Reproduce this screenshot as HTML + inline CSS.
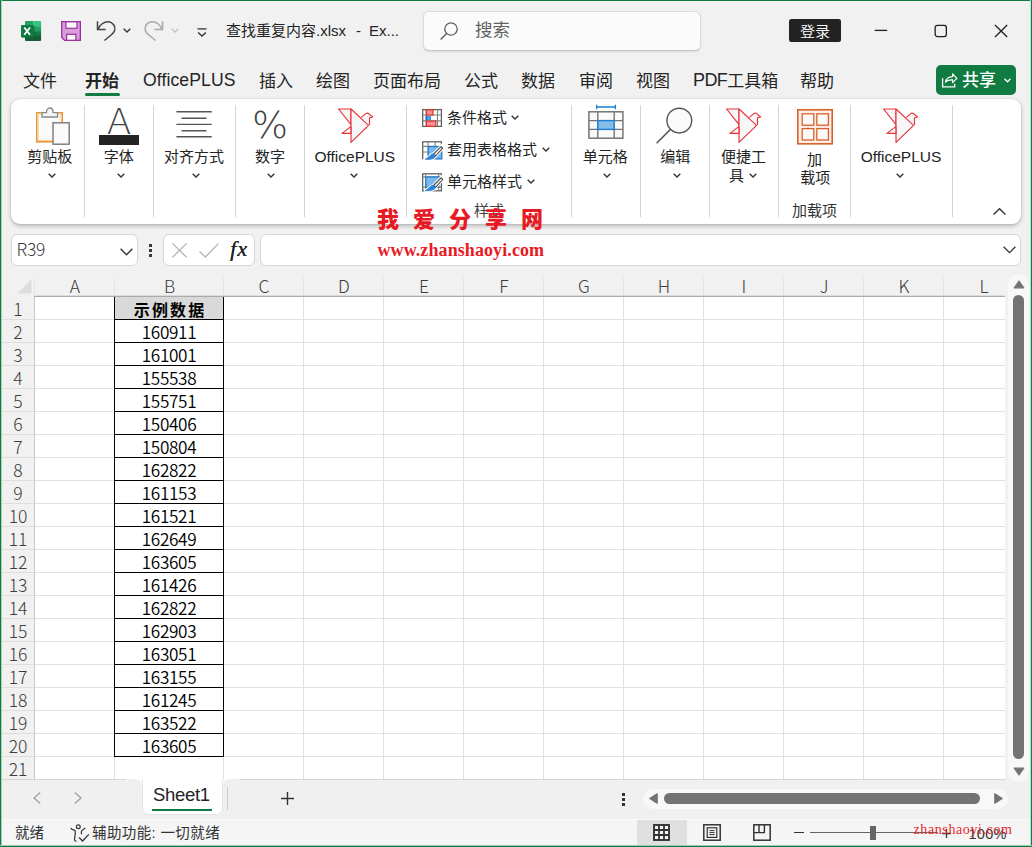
<!DOCTYPE html>
<html lang="zh-CN">
<head>
<meta charset="utf-8">
<title>查找重复内容.xlsx - Excel</title>
<style>
*{box-sizing:border-box;margin:0;padding:0}
html,body{width:1032px;height:847px;overflow:hidden;background:#f1f1f1}
body{font-family:"Liberation Sans","Noto Sans CJK SC",sans-serif;color:#242424;position:relative}
.a{position:absolute}
.t{position:absolute;white-space:nowrap;line-height:1}
svg{position:absolute;overflow:visible}
.tab{position:absolute;top:72px;font-size:17px;white-space:nowrap;line-height:20px;color:#242424}
.sep{position:absolute;top:105px;width:1px;height:112px;background:#d4d4d4}
.gl{position:absolute;font-size:15px;text-align:center;line-height:20px;white-space:nowrap;color:#242424;transform:translateX(-50%)}
.ch{position:absolute;width:8px;height:5px}
.colh{position:absolute;top:275px;height:20px;width:80px;font-size:17.5px;line-height:21px;text-align:center;color:#3c3c3c;font-family:"Noto Sans CJK SC","Liberation Sans",sans-serif;font-weight:300}
.rowh{position:absolute;left:2px;width:32px;height:23px;font-size:17.5px;line-height:26px;color:#3c3c3c;text-align:center;font-family:"Noto Sans CJK SC","Liberation Sans",sans-serif;font-weight:300}
.cell{position:absolute;left:114px;width:110px;height:24px;border:1px solid #000;text-align:center;font-size:17.2px;line-height:23px;letter-spacing:-0.35px;font-weight:350;color:#000;font-family:"Noto Sans CJK SC","Liberation Sans",sans-serif;background:#fff}
.vl{position:absolute;top:297px;width:1px;height:482px;background:#e1e1e1}
.hl{position:absolute;left:34px;height:1px;width:971px;background:#e1e1e1}
.box{position:absolute;background:#fff;border:1px solid #d6d6d6;border-radius:6px}
</style>
</head>
<body>

<div class="a" style="left:0;top:0;width:1032px;height:1px;background:#107c41"></div>
<div class="a" style="left:0;top:0;width:1px;height:847px;background:#107c41"></div>
<div class="a" style="left:1px;top:0;width:1px;height:847px;background:#a8cfb8"></div>
<div class="a" style="left:1031px;top:0;width:1px;height:847px;background:#107c41"></div>
<div class="a" style="left:1030px;top:0;width:1px;height:847px;background:#c3dccd"></div>
<div class="a" style="left:0;top:846px;width:1032px;height:1px;background:#107c41"></div>
<div class="a" style="left:0;top:845px;width:1032px;height:1px;background:#9cc9af"></div>
<!-- TITLE BAR -->
<svg style="left:20px;top:20px" width="22" height="22" viewBox="0 0 22 22">
<path d="M6 1 H13.1 V6.2 H5 V2 Q5 1 6 1 Z" fill="#21a366"/><path d="M13.1 1 H20.1 Q21.1 1 21.1 2 V6.2 H13.1 Z" fill="#33c481"/>
<rect x="5" y="6.2" width="8.1" height="4.9" fill="#107c41"/><rect x="13.1" y="6.2" width="8" height="4.9" fill="#21a366"/>
<rect x="5" y="11.1" width="8.1" height="5" fill="#185c37"/><rect x="13.1" y="11.1" width="8" height="5" fill="#107c41"/>
<path d="M5 16.1 H21.1 V19.9 Q21.1 20.9 20.1 20.9 H6 Q5 20.9 5 19.9 Z" fill="#185c37"/>
<rect x="1.6" y="5.3" width="13" height="12.5" rx="1.2" fill="#0b3d24" opacity="0.35"/>
<rect x="1" y="4.9" width="12.9" height="12.5" rx="1.2" fill="#107c41"/>
<path d="M4.3 7.5 L10 14.8 M10 7.5 L4.3 14.8" stroke="#fff" stroke-width="1.8" fill="none"/>
</svg>
<svg style="left:61px;top:21px" width="20" height="20" viewBox="0 0 20 20">
<path d="M0.75 0.7 H19.35 V19.35 H3.7 L0.75 16.5 Z" fill="#dc9cdc" stroke="#9a2e9e" stroke-width="1.3"/>
<rect x="4.9" y="0.8" width="11.1" height="6.5" fill="#f8f8f8" stroke="#9a2e9e" stroke-width="1.2"/>
<rect x="5.6" y="13.3" width="9.3" height="6" fill="#f8f8f8" stroke="#9a2e9e" stroke-width="1.2"/>
</svg>
<svg style="left:96px;top:20px" width="20" height="21" viewBox="0 0 20 21">
<path d="M1.5 1.3 V9.5 H9.7" fill="none" stroke="#444" stroke-width="1.5"/>
<path d="M2 9.2 C4 4.4 8.4 1.3 12.4 1.7 C17 2.2 19.7 6.4 18.7 10.2 C18.2 12 17 13.4 15.4 14.8 L8.4 20.5" fill="none" stroke="#444" stroke-width="1.5"/>
</svg>
<svg style="left:123.4px;top:27.9px" width="8" height="5" viewBox="0 0 8 5"><path d="M0.7 0.7 L4 4 L7.3 0.7" fill="none" stroke="#333" stroke-width="1.4"/></svg>
<svg style="left:143.9px;top:20px" width="20" height="21" viewBox="0 0 20 21">
<g transform="translate(20,0) scale(-1,1)">
<path d="M1.5 1.3 V9.5 H9.7" fill="none" stroke="#a8a8a8" stroke-width="1.5"/>
<path d="M2 9.2 C4 4.4 8.4 1.3 12.4 1.7 C17 2.2 19.7 6.4 18.7 10.2 C18.2 12 17 13.4 15.4 14.8 L8.4 20.5" fill="none" stroke="#a8a8a8" stroke-width="1.5"/>
</g></svg>
<svg style="left:171.4px;top:27.9px" width="8" height="5" viewBox="0 0 8 5"><path d="M0.7 0.7 L4 4 L7.3 0.7" fill="none" stroke="#c4c4c4" stroke-width="1.3"/></svg>
<svg style="left:196.5px;top:27.6px" width="10" height="9" viewBox="0 0 10 9"><path d="M0.5 0.9 H9.5" stroke="#333" stroke-width="1.3"/><path d="M1.2 4.5 L5 8 L8.8 4.5" fill="none" stroke="#333" stroke-width="1.4"/></svg>
<div class="t" style="left:226px;top:23px;font-size:15px;color:#242424">查找重复内容.xlsx</div>
<div class="t" style="left:356px;top:23px;font-size:15px;color:#242424">-</div>
<div class="t" style="left:369px;top:23px;font-size:15px;color:#242424">Ex...</div>
<div class="a" style="left:423px;top:11px;width:278px;height:40px;background:#fbfbfb;border:1px solid #dcdcdc;border-bottom-color:#c9c9c9;border-radius:6px;box-shadow:0 1px 2px rgba(0,0,0,.10)"></div>
<svg style="left:440px;top:22px" width="18" height="18" viewBox="0 0 18 18"><circle cx="11" cy="7" r="6.2" fill="none" stroke="#606060" stroke-width="1.3"/><path d="M6.6 11.4 L0.6 17.4" stroke="#606060" stroke-width="1.4"/></svg>
<div class="t" style="left:475px;top:22px;font-size:17.5px;color:#616161">搜索</div>
<div class="a" style="left:789px;top:19px;width:52px;height:23px;background:#222;border-radius:2.5px;color:#fff;font-size:15px;line-height:25px;text-align:center;font-weight:350">登录</div>
<svg style="left:874px;top:24px" width="14" height="14" viewBox="0 0 14 14"><path d="M0.7 6.4 H13.2" stroke="#1f1f1f" stroke-width="1.3"/></svg>
<svg style="left:934px;top:24px" width="14" height="14" viewBox="0 0 14 14"><rect x="1.15" y="1.35" width="11.2" height="11.2" rx="2.2" fill="none" stroke="#1f1f1f" stroke-width="1.3"/></svg>
<svg style="left:994px;top:24px" width="14" height="14" viewBox="0 0 14 14"><path d="M1 1 L13.2 13 M13.2 1 L1 13" stroke="#1f1f1f" stroke-width="1.3"/></svg>
<!-- TABS -->
<div class="tab" style="left:23px">文件</div>
<div class="tab" style="left:85px;font-weight:bold">开始</div>
<div class="tab" style="left:143px;font-size:17.6px;letter-spacing:0.1px;margin-top:-2px">OfficePLUS</div>
<div class="tab" style="left:259px">插入</div>
<div class="tab" style="left:316px">绘图</div>
<div class="tab" style="left:373px">页面布局</div>
<div class="tab" style="left:464px">公式</div>
<div class="tab" style="left:521px">数据</div>
<div class="tab" style="left:579px">审阅</div>
<div class="tab" style="left:636px">视图</div>
<div class="tab" style="left:693px;margin-top:-1px"><span style="font-size:18px;letter-spacing:-0.6px;position:relative;top:-1px">PDF</span>工具箱</div>
<div class="tab" style="left:800px">帮助</div>
<div class="a" style="left:85px;top:93px;width:35px;height:3px;background:#107c41;border-radius:1.5px"></div>
<div class="a" style="left:936px;top:65px;width:80px;height:30px;background:#107c41;border-radius:5px"></div>
<svg style="left:941.5px;top:72.5px" width="16" height="15" viewBox="0 0 16 15"><path d="M0.6 5.3 V13.9 H12.7 V10.7" fill="none" stroke="#fff" stroke-width="1.3"/><path d="M3.4 9 C4 5.6 6.8 3.9 10.6 3.7 V0.9 L14.9 5.3 L10.6 9.7 V6.8 C7.4 6.7 5 7.2 3.4 9 Z" fill="none" stroke="#fff" stroke-width="1.2" stroke-linejoin="round"/></svg>
<div class="t" style="left:962px;top:72px;font-size:17px;color:#fff;font-weight:500">共享</div>
<svg style="left:1004px;top:78px" width="7" height="5" viewBox="0 0 7 5"><path d="M0.5 0.7 L3.5 3.8 L6.5 0.7" fill="none" stroke="#fff" stroke-width="1.3"/></svg>
<!-- RIBBON -->
<div class="a" style="left:11px;top:99px;width:1010px;height:125px;background:#fff;border-radius:9px;box-shadow:0 2px 4px rgba(0,0,0,.24),0 0 2px rgba(0,0,0,.14)"></div>
<div class="sep" style="left:84px"></div>
<div class="sep" style="left:153px"></div>
<div class="sep" style="left:235px"></div>
<div class="sep" style="left:304px"></div>
<div class="sep" style="left:406px"></div>
<div class="sep" style="left:571px"></div>
<div class="sep" style="left:640px"></div>
<div class="sep" style="left:709px"></div>
<div class="sep" style="left:778px"></div>
<div class="sep" style="left:850px"></div>
<div class="sep" style="left:952px"></div>
<svg style="left:36px;top:107px" width="34" height="38" viewBox="0 0 34 38">
<rect x="0.8" y="5.8" width="25.4" height="29" fill="#fafafa" stroke="#e8902c" stroke-width="1.5"/>
<rect x="2.2" y="7.2" width="22.6" height="26.2" fill="none" stroke="#fbd7a3" stroke-width="1.2"/>
<path d="M6 10 V5.6 H10.5 C10.5 2.8 11.8 1 13.8 1 C15.8 1 17.1 2.8 17.1 5.6 H21.6 V10 Z" fill="#f6f6f6" stroke="#8a8a8a" stroke-width="1.3"/>
<rect x="17" y="15.8" width="16.2" height="21.4" fill="#fafafa" stroke="#787878" stroke-width="1.4"/>
</svg>
<div class="gl" style="left:49.7px;top:147px">剪贴板</div>
<svg style="left:47.5px;top:173.0px" width="8" height="5" viewBox="0 0 8 5"><path d="M0.7 0.7 L4 4 L7.3 0.7" fill="none" stroke="#333" stroke-width="1.4"/></svg>
<div class="t" style="left:98px;top:99.5px;width:42px;text-align:center;font-family:'DejaVu Sans Light','DejaVu Sans','Liberation Sans',sans-serif;font-weight:200;font-size:36px;line-height:44px;color:#444">A</div>
<div class="a" style="left:99px;top:135px;width:40px;height:9.5px;background:#242424"></div>
<div class="gl" style="left:118.8px;top:147px">字体</div>
<svg style="left:116.5px;top:173.0px" width="8" height="5" viewBox="0 0 8 5"><path d="M0.7 0.7 L4 4 L7.3 0.7" fill="none" stroke="#333" stroke-width="1.4"/></svg>
<svg style="left:176px;top:110px" width="36" height="28" viewBox="0 0 36 28"><path d="M0.4 1.8 H35.7 M5.5 8.2 H30.5 M0.4 14.4 H35.7 M5.5 20.7 H30.5 M0.4 26.8 H35.7" stroke="#555" stroke-width="1.4"/></svg>
<div class="gl" style="left:194.1px;top:147px">对齐方式</div>
<svg style="left:191.5px;top:173.0px" width="8" height="5" viewBox="0 0 8 5"><path d="M0.7 0.7 L4 4 L7.3 0.7" fill="none" stroke="#333" stroke-width="1.4"/></svg>
<div class="t" style="left:249px;top:101px;width:42px;text-align:center;font-family:'DejaVu Sans Light','DejaVu Sans','Liberation Sans',sans-serif;font-weight:200;font-size:38px;line-height:48px;color:#444">%</div>
<div class="gl" style="left:270px;top:147px">数字</div>
<svg style="left:267.3px;top:173.0px" width="8" height="5" viewBox="0 0 8 5"><path d="M0.7 0.7 L4 4 L7.3 0.7" fill="none" stroke="#333" stroke-width="1.4"/></svg>
<svg style="left:337.5px;top:107.7px" width="36" height="36" viewBox="0 0 36 36">
<path d="M0.6 1 H13 V16.6 Z" fill="#f7f7f7" stroke="#e8333a" stroke-width="1.15" stroke-linejoin="round"/>
<path d="M13 1 L30.6 17.4 L13 34.4 Z" fill="#f7f7f7" stroke="#e8333a" stroke-width="1.15" stroke-linejoin="round"/>
<path d="M12.8 18.6 L3.9 25.4 H13 Z" fill="#f7f7f7" stroke="#e8333a" stroke-width="1.15" stroke-linejoin="round"/>
<path d="M23.3 9.4 L27.8 5.6 C29.2 4.7 30.8 5.3 31.8 6.7 L34.7 9 L31.5 9.8 V17" fill="#f7f7f7" stroke="#e8333a" stroke-width="1.15" stroke-linejoin="round"/>
</svg>
<div class="gl" style="left:354.8px;top:147px;font-size:15.5px">OfficePLUS</div>
<svg style="left:350.3px;top:173.0px" width="8" height="5" viewBox="0 0 8 5"><path d="M0.7 0.7 L4 4 L7.3 0.7" fill="none" stroke="#333" stroke-width="1.4"/></svg>
<svg style="left:422px;top:108.9px" width="20" height="18" viewBox="0 0 20 18">
<rect x="0.7" y="0.6" width="18.7" height="16.8" fill="#fff" stroke="#5c5c5c" stroke-width="1.25"/>
<path d="M4.2 0.6 V17.4 M15.5 0.6 V17.4 M0.7 6 H19.4 M0.7 11.9 H19.4" stroke="#808080" stroke-width="1.1"/>
<rect x="4.4" y="0.8" width="6.6" height="5.2" fill="#ff8f99" stroke="#de2f1f" stroke-width="1.15"/>
<rect x="3.8" y="6.9" width="5" height="4.2" fill="#5aaef2"/>
<rect x="3.8" y="6.9" width="1.6" height="4.2" fill="#1767c4"/>
<rect x="7.6" y="6.9" width="1.2" height="4.2" fill="#2a7fd6"/>
<rect x="4.4" y="12.1" width="9.4" height="5.2" fill="#ff8f99" stroke="#de2f1f" stroke-width="1.15"/>
</svg>
<svg style="left:422px;top:140.9px" width="21" height="19" viewBox="0 0 21 19">
<rect x="0.7" y="0.8" width="18.7" height="16.8" fill="#fff" stroke="#5c5c5c" stroke-width="1.25"/>
<path d="M6.1 0.8 V17.6 M13.2 0.8 V17.6 M0.7 5.4 H19.4 M0.7 11 H19.4" stroke="#808080" stroke-width="1.1"/>
<rect x="6.3" y="5.6" width="13.5" height="12.2" fill="#7ab8ee" stroke="#1e7fd0" stroke-width="1.2"/>
<path d="M1.3 17.6 H6" stroke="#fff" stroke-width="1.6"/>
<path d="M22 4.1 L11 15.6" stroke="#fff" stroke-width="5.6"/>
<path d="M11.2 12.8 L13.7 15.2 C12.4 18 8 19 3.2 18.2 C6.6 17 8 13.4 11.2 12.8 Z" fill="#fff" stroke="#fff" stroke-width="2.4" stroke-linejoin="round"/>
<path d="M19.0 5.6 L20.7 7.2 L13.5 15.0 L11.5 13.2 Z" fill="#f4f4f4" stroke="#4a4a4a" stroke-width="1.1" stroke-linejoin="round"/>
<path d="M11.2 12.8 L13.7 15.2 C12.4 18 8 19 3.2 18.2 C6.6 17 8 13.4 11.2 12.8 Z" fill="#2b85dc" stroke="#1e73cc" stroke-width="0.6" stroke-linejoin="round"/>
</svg>
<svg style="left:422px;top:172.7px" width="21" height="19" viewBox="0 0 21 19">
<rect x="0.7" y="0.8" width="18.7" height="17" fill="#fff" stroke="#5c5c5c" stroke-width="1.25"/>
<path d="M3.7 0.8 V17.8 M16.7 0.8 V17.8 M0.7 3.9 H19.4 M0.7 14.1 H19.4" stroke="#808080" stroke-width="1.1"/>
<rect x="3.8" y="4" width="12.9" height="10.1" fill="#7ab8ee" stroke="#1e7fd0" stroke-width="1.2"/>
<path d="M22 3.4 L11 14.9" stroke="#fff" stroke-width="5.6"/>
<path d="M11.2 12.1 L13.7 14.5 C12.4 17.3 8 18.3 3.2 17.5 C6.6 16.3 8 12.7 11.2 12.1 Z" fill="#fff" stroke="#fff" stroke-width="2.4" stroke-linejoin="round"/>
<path d="M19.0 4.9 L20.7 6.5 L13.5 14.3 L11.5 12.5 Z" fill="#f4f4f4" stroke="#4a4a4a" stroke-width="1.1" stroke-linejoin="round"/>
<path d="M11.2 12.1 L13.7 14.5 C12.4 17.3 8 18.3 3.2 17.5 C6.6 16.3 8 12.7 11.2 12.1 Z" fill="#2b85dc" stroke="#1e73cc" stroke-width="0.6" stroke-linejoin="round"/>
</svg>
<div class="t" style="left:447px;top:108px;font-size:15px;line-height:20px">条件格式</div>
<svg style="left:511.4px;top:115.1px" width="8" height="5" viewBox="0 0 8 5"><path d="M0.7 0.7 L4 4 L7.3 0.7" fill="none" stroke="#333" stroke-width="1.4"/></svg>
<div class="t" style="left:447px;top:140px;font-size:15px;line-height:20px">套用表格格式</div>
<svg style="left:541.7px;top:146.9px" width="8" height="5" viewBox="0 0 8 5"><path d="M0.7 0.7 L4 4 L7.3 0.7" fill="none" stroke="#333" stroke-width="1.4"/></svg>
<div class="t" style="left:447px;top:172px;font-size:15px;line-height:20px">单元格样式</div>
<svg style="left:526.8px;top:178.9px" width="8" height="5" viewBox="0 0 8 5"><path d="M0.7 0.7 L4 4 L7.3 0.7" fill="none" stroke="#333" stroke-width="1.4"/></svg>
<div class="gl" style="left:489px;top:201px;color:#444">样式</div>
<svg style="left:588px;top:104px" width="36" height="36" viewBox="0 0 36 36">
<path d="M8.6 3 H27.4 M8.6 0.8 V5.2 M27.4 0.8 V5.2" stroke="#1e7fd0" stroke-width="1.3"/>
<rect x="0.9" y="7.8" width="34" height="26.4" fill="#fafafa" stroke="#767676" stroke-width="1.5"/>
<path d="M9.8 7.8 V34.2 M26.2 7.8 V34.2 M0.9 16.6 H34.9 M0.9 25.4 H34.9" stroke="#767676" stroke-width="1.4"/>
<rect x="9.8" y="16.6" width="16.4" height="8.8" fill="#83beec" stroke="#1e7fd0" stroke-width="1.4"/>
</svg>
<div class="gl" style="left:605.3px;top:147px">单元格</div>
<svg style="left:603.4px;top:173.0px" width="8" height="5" viewBox="0 0 8 5"><path d="M0.7 0.7 L4 4 L7.3 0.7" fill="none" stroke="#333" stroke-width="1.4"/></svg>
<svg style="left:656px;top:106px" width="38" height="38" viewBox="0 0 38 38">
<circle cx="23.3" cy="14.6" r="12.4" fill="#fafafa" stroke="#555" stroke-width="1.4"/>
<path d="M14.2 23.6 L0.6 37.2" stroke="#555" stroke-width="1.5"/>
</svg>
<div class="gl" style="left:675.2px;top:147px">编辑</div>
<svg style="left:672.5px;top:173.0px" width="8" height="5" viewBox="0 0 8 5"><path d="M0.7 0.7 L4 4 L7.3 0.7" fill="none" stroke="#333" stroke-width="1.4"/></svg>
<svg style="left:726.4px;top:107.7px" width="36" height="36" viewBox="0 0 36 36">
<path d="M0.6 1 H13 V16.6 Z" fill="#f7f7f7" stroke="#e8333a" stroke-width="1.15" stroke-linejoin="round"/>
<path d="M13 1 L30.6 17.4 L13 34.4 Z" fill="#f7f7f7" stroke="#e8333a" stroke-width="1.15" stroke-linejoin="round"/>
<path d="M12.8 18.6 L3.9 25.4 H13 Z" fill="#f7f7f7" stroke="#e8333a" stroke-width="1.15" stroke-linejoin="round"/>
<path d="M23.3 9.4 L27.8 5.6 C29.2 4.7 30.8 5.3 31.8 6.7 L34.7 9 L31.5 9.8 V17" fill="#f7f7f7" stroke="#e8333a" stroke-width="1.15" stroke-linejoin="round"/>
</svg>
<div class="gl" style="left:743.5px;top:147px">便捷工</div>
<div class="t" style="left:729px;top:166px;font-size:15px;line-height:20px">具</div>
<svg style="left:748.5px;top:173.0px" width="8" height="5" viewBox="0 0 8 5"><path d="M0.7 0.7 L4 4 L7.3 0.7" fill="none" stroke="#333" stroke-width="1.4"/></svg>
<svg style="left:797px;top:109px" width="36" height="36" viewBox="0 0 36 36">
<rect x="0.8" y="0.8" width="34.4" height="34" fill="#fdeee6" stroke="#d9622b" stroke-width="1.6"/>
<rect x="5.2" y="4.8" width="11.6" height="11.4" fill="#fafafa" stroke="#d9622b" stroke-width="1.3"/>
<rect x="19.8" y="4.8" width="11.6" height="11.4" fill="#fafafa" stroke="#d9622b" stroke-width="1.3"/>
<rect x="5.2" y="19.6" width="11.6" height="11.4" fill="#fafafa" stroke="#d9622b" stroke-width="1.3"/>
<rect x="19.8" y="19.6" width="11.6" height="11.4" fill="#fafafa" stroke="#d9622b" stroke-width="1.3"/>
</svg>
<div class="gl" style="left:814.5px;top:149.5px">加</div>
<div class="gl" style="left:815.3px;top:167.5px">载项</div>
<div class="gl" style="left:814.4px;top:201px;color:#333">加载项</div>
<svg style="left:883.3px;top:107.6px" width="36" height="36" viewBox="0 0 36 36">
<path d="M0.6 1 H13 V16.6 Z" fill="#f7f7f7" stroke="#e8333a" stroke-width="1.15" stroke-linejoin="round"/>
<path d="M13 1 L30.6 17.4 L13 34.4 Z" fill="#f7f7f7" stroke="#e8333a" stroke-width="1.15" stroke-linejoin="round"/>
<path d="M12.8 18.6 L3.9 25.4 H13 Z" fill="#f7f7f7" stroke="#e8333a" stroke-width="1.15" stroke-linejoin="round"/>
<path d="M23.3 9.4 L27.8 5.6 C29.2 4.7 30.8 5.3 31.8 6.7 L34.7 9 L31.5 9.8 V17" fill="#f7f7f7" stroke="#e8333a" stroke-width="1.15" stroke-linejoin="round"/>
</svg>
<div class="gl" style="left:901px;top:147px;font-size:15.5px">OfficePLUS</div>
<svg style="left:896.3px;top:173.0px" width="8" height="5" viewBox="0 0 8 5"><path d="M0.7 0.7 L4 4 L7.3 0.7" fill="none" stroke="#333" stroke-width="1.4"/></svg>
<svg style="left:992.5px;top:207.5px" width="13" height="7" viewBox="0 0 13 7"><path d="M0.6 6.4 L6.5 0.8 L12.4 6.4" fill="none" stroke="#333" stroke-width="1.4"/></svg>
<!-- FORMULA BAR -->
<div class="box" style="left:11px;top:234px;width:127px;height:32px"></div>
<div class="t" style="left:16.5px;top:237.5px;font-size:17.5px;line-height:22px;color:#3a3a3a;letter-spacing:-0.2px;font-family:'Noto Sans CJK SC','Liberation Sans',sans-serif;font-weight:300">R39</div>
<svg style="left:119.5px;top:248.2px" width="13" height="8" viewBox="0 0 13 8"><path d="M0.6 0.8 L6.5 6.8 L12.4 0.8" fill="none" stroke="#333" stroke-width="1.3"/></svg>
<div class="a" style="left:149px;top:244px;width:3px;height:3px;background:#3a3a3a"></div>
<div class="a" style="left:149px;top:249px;width:3px;height:3px;background:#3a3a3a"></div>
<div class="a" style="left:149px;top:254px;width:3px;height:3px;background:#3a3a3a"></div>
<div class="box" style="left:163px;top:234px;width:92px;height:32px"></div>
<svg style="left:171.5px;top:243px" width="15" height="15" viewBox="0 0 15 15"><path d="M0.4 0.4 L14.6 14.4 M14.6 0.4 L0.4 14.4" stroke="#b2b2b2" stroke-width="1.3"/></svg>
<svg style="left:199px;top:242.5px" width="20" height="15" viewBox="0 0 20 15"><path d="M0.5 8.4 L6.4 14 L19.4 0.6" fill="none" stroke="#b2b2b2" stroke-width="1.3"/></svg>
<div class="t" style="left:230px;top:237px;font-family:'Liberation Serif',serif;font-style:italic;font-size:22px;line-height:24px;color:#222;letter-spacing:1.2px;text-shadow:0.3px 0 0 #222">fx</div>
<div class="box" style="left:260px;top:234px;width:761px;height:32px"></div>
<svg style="left:1003px;top:245.5px" width="13" height="8" viewBox="0 0 13 8"><path d="M0.6 0.8 L6.5 6.6 L12.4 0.8" fill="none" stroke="#333" stroke-width="1.3"/></svg>
<!-- GRID -->
<div class="a" style="left:34px;top:297px;width:971px;height:482px;background:#fff"></div>
<svg style="left:17px;top:278.5px" width="15" height="15" viewBox="0 0 15 15"><path d="M14.5 0.5 V14.5 H0.5 Z" fill="#dcdcdc"/></svg>
<div class="colh" style="left:35px;width:80px">A</div>
<div class="colh" style="left:115px;width:109px">B</div>
<div class="colh" style="left:224px;width:80px">C</div>
<div class="colh" style="left:304px;width:80px">D</div>
<div class="colh" style="left:384px;width:80px">E</div>
<div class="colh" style="left:464px;width:80px">F</div>
<div class="colh" style="left:544px;width:80px">G</div>
<div class="colh" style="left:624px;width:80px">H</div>
<div class="colh" style="left:704px;width:80px">I</div>
<div class="colh" style="left:784px;width:80px">J</div>
<div class="colh" style="left:864px;width:80px">K</div>
<div class="colh" style="left:944px;width:80px">L</div>
<div class="a" style="left:34px;top:278px;width:1px;height:17px;background:#e2e2e2"></div>
<div class="a" style="left:114px;top:278px;width:1px;height:17px;background:#e2e2e2"></div>
<div class="a" style="left:223px;top:278px;width:1px;height:17px;background:#e2e2e2"></div>
<div class="a" style="left:303px;top:278px;width:1px;height:17px;background:#e2e2e2"></div>
<div class="a" style="left:383px;top:278px;width:1px;height:17px;background:#e2e2e2"></div>
<div class="a" style="left:463px;top:278px;width:1px;height:17px;background:#e2e2e2"></div>
<div class="a" style="left:543px;top:278px;width:1px;height:17px;background:#e2e2e2"></div>
<div class="a" style="left:623px;top:278px;width:1px;height:17px;background:#e2e2e2"></div>
<div class="a" style="left:703px;top:278px;width:1px;height:17px;background:#e2e2e2"></div>
<div class="a" style="left:783px;top:278px;width:1px;height:17px;background:#e2e2e2"></div>
<div class="a" style="left:863px;top:278px;width:1px;height:17px;background:#e2e2e2"></div>
<div class="a" style="left:943px;top:278px;width:1px;height:17px;background:#e2e2e2"></div>
<div class="vl" style="left:114px"></div>
<div class="vl" style="left:223px"></div>
<div class="vl" style="left:303px"></div>
<div class="vl" style="left:383px"></div>
<div class="vl" style="left:463px"></div>
<div class="vl" style="left:543px"></div>
<div class="vl" style="left:623px"></div>
<div class="vl" style="left:703px"></div>
<div class="vl" style="left:783px"></div>
<div class="vl" style="left:863px"></div>
<div class="vl" style="left:943px"></div>
<div class="rowh" style="top:296px">1</div>
<div class="hl" style="top:319px"></div>
<div class="a" style="left:2px;top:319px;width:32px;height:1px;background:#dedede"></div>
<div class="rowh" style="top:319px">2</div>
<div class="hl" style="top:342px"></div>
<div class="a" style="left:2px;top:342px;width:32px;height:1px;background:#dedede"></div>
<div class="rowh" style="top:342px">3</div>
<div class="hl" style="top:365px"></div>
<div class="a" style="left:2px;top:365px;width:32px;height:1px;background:#dedede"></div>
<div class="rowh" style="top:365px">4</div>
<div class="hl" style="top:388px"></div>
<div class="a" style="left:2px;top:388px;width:32px;height:1px;background:#dedede"></div>
<div class="rowh" style="top:388px">5</div>
<div class="hl" style="top:411px"></div>
<div class="a" style="left:2px;top:411px;width:32px;height:1px;background:#dedede"></div>
<div class="rowh" style="top:411px">6</div>
<div class="hl" style="top:434px"></div>
<div class="a" style="left:2px;top:434px;width:32px;height:1px;background:#dedede"></div>
<div class="rowh" style="top:434px">7</div>
<div class="hl" style="top:457px"></div>
<div class="a" style="left:2px;top:457px;width:32px;height:1px;background:#dedede"></div>
<div class="rowh" style="top:457px">8</div>
<div class="hl" style="top:480px"></div>
<div class="a" style="left:2px;top:480px;width:32px;height:1px;background:#dedede"></div>
<div class="rowh" style="top:480px">9</div>
<div class="hl" style="top:503px"></div>
<div class="a" style="left:2px;top:503px;width:32px;height:1px;background:#dedede"></div>
<div class="rowh" style="top:503px">10</div>
<div class="hl" style="top:526px"></div>
<div class="a" style="left:2px;top:526px;width:32px;height:1px;background:#dedede"></div>
<div class="rowh" style="top:526px">11</div>
<div class="hl" style="top:549px"></div>
<div class="a" style="left:2px;top:549px;width:32px;height:1px;background:#dedede"></div>
<div class="rowh" style="top:549px">12</div>
<div class="hl" style="top:572px"></div>
<div class="a" style="left:2px;top:572px;width:32px;height:1px;background:#dedede"></div>
<div class="rowh" style="top:572px">13</div>
<div class="hl" style="top:595px"></div>
<div class="a" style="left:2px;top:595px;width:32px;height:1px;background:#dedede"></div>
<div class="rowh" style="top:595px">14</div>
<div class="hl" style="top:618px"></div>
<div class="a" style="left:2px;top:618px;width:32px;height:1px;background:#dedede"></div>
<div class="rowh" style="top:618px">15</div>
<div class="hl" style="top:641px"></div>
<div class="a" style="left:2px;top:641px;width:32px;height:1px;background:#dedede"></div>
<div class="rowh" style="top:641px">16</div>
<div class="hl" style="top:664px"></div>
<div class="a" style="left:2px;top:664px;width:32px;height:1px;background:#dedede"></div>
<div class="rowh" style="top:664px">17</div>
<div class="hl" style="top:687px"></div>
<div class="a" style="left:2px;top:687px;width:32px;height:1px;background:#dedede"></div>
<div class="rowh" style="top:687px">18</div>
<div class="hl" style="top:710px"></div>
<div class="a" style="left:2px;top:710px;width:32px;height:1px;background:#dedede"></div>
<div class="rowh" style="top:710px">19</div>
<div class="hl" style="top:733px"></div>
<div class="a" style="left:2px;top:733px;width:32px;height:1px;background:#dedede"></div>
<div class="rowh" style="top:733px">20</div>
<div class="hl" style="top:756px"></div>
<div class="a" style="left:2px;top:756px;width:32px;height:1px;background:#dedede"></div>
<div class="rowh" style="top:756px">21</div>
<div class="hl" style="top:779px"></div>
<div class="a" style="left:2px;top:779px;width:32px;height:1px;background:#dedede"></div>
<div class="a" style="left:34px;top:297px;width:1px;height:482px;background:#c8c8c8"></div>
<div class="cell" style="top:296px;background:#d9d9d9;font-weight:bold;font-size:16px;line-height:24px;letter-spacing:2.2px;padding-left:2.2px;font-family:'Noto Sans CJK SC','Liberation Sans',sans-serif">示例数据</div>
<div class="cell" style="top:319px">160911</div>
<div class="cell" style="top:342px">161001</div>
<div class="cell" style="top:365px">155538</div>
<div class="cell" style="top:388px">155751</div>
<div class="cell" style="top:411px">150406</div>
<div class="cell" style="top:434px">150804</div>
<div class="cell" style="top:457px">162822</div>
<div class="cell" style="top:480px">161153</div>
<div class="cell" style="top:503px">161521</div>
<div class="cell" style="top:526px">162649</div>
<div class="cell" style="top:549px">163605</div>
<div class="cell" style="top:572px">161426</div>
<div class="cell" style="top:595px">162822</div>
<div class="cell" style="top:618px">162903</div>
<div class="cell" style="top:641px">163051</div>
<div class="cell" style="top:664px">163155</div>
<div class="cell" style="top:687px">161245</div>
<div class="cell" style="top:710px">163522</div>
<div class="cell" style="top:733px">163605</div>
<div class="a" style="left:34px;top:296px;width:971px;height:1px;background:#ababab"></div>
<div class="a" style="left:34px;top:295px;width:971px;height:1px;background:#dcdcdc"></div>
<!-- SHEET TABS -->
<div class="a" style="left:2px;top:779px;width:1028px;height:41px;background:#f0f0f0"></div>
<div class="a" style="left:2px;top:779px;width:1003px;height:1px;background:#d6d6d6"></div>
<div class="a" style="left:134px;top:779px;width:97px;height:10px;background:#fff"></div>
<div class="a" style="left:126px;top:779px;width:16px;height:12px;background:#f0f0f0;border-radius:0 6px 0 0"></div>
<div class="a" style="left:223px;top:779px;width:16px;height:12px;background:#f0f0f0;border-radius:6px 0 0 0"></div>
<div class="a" style="left:142px;top:779px;width:81px;height:35.5px;background:#fff;border-radius:0 0 6px 6px;border:1px solid #e4e4e4;border-top:none"></div>
<svg style="left:32.5px;top:791.5px" width="8" height="12" viewBox="0 0 8 12"><path d="M7.2 0.6 L1 6 L7.2 11.4" fill="none" stroke="#a0a0a0" stroke-width="1.3"/></svg>
<svg style="left:73.5px;top:791.5px" width="8" height="12" viewBox="0 0 8 12"><path d="M0.8 0.6 L7 6 L0.8 11.4" fill="none" stroke="#a0a0a0" stroke-width="1.3"/></svg>
<div class="t" style="left:153px;top:784px;font-size:18.5px;line-height:22px;color:#242424;letter-spacing:-0.3px">Sheet1</div>
<div class="a" style="left:152px;top:808.5px;width:60px;height:2px;background:#107c41"></div>
<div class="a" style="left:227px;top:787px;width:1px;height:23px;background:#cbcbcb"></div>
<svg style="left:280.5px;top:791.5px" width="13" height="13" viewBox="0 0 13 13"><path d="M6.5 0 V13 M0 6.5 H13" stroke="#333" stroke-width="1.4"/></svg>
<div class="a" style="left:621.5px;top:793px;width:3.4px;height:3.2px;background:#333"></div>
<div class="a" style="left:621.5px;top:798px;width:3.4px;height:3.2px;background:#333"></div>
<div class="a" style="left:621.5px;top:803px;width:3.4px;height:3.2px;background:#333"></div>
<div class="a" style="left:643px;top:788.5px;width:365px;height:20.5px;background:#f8f8f8;border-radius:10px"></div>
<svg style="left:648.5px;top:793px" width="9" height="11" viewBox="0 0 9 11"><path d="M0.8 5.5 L8.2 0.8 V10.2 Z" fill="#737373" stroke="#737373" stroke-width="1.2" stroke-linejoin="round"/></svg>
<div class="a" style="left:664px;top:793px;width:316px;height:10.8px;background:#737373;border-radius:5.4px"></div>
<svg style="left:993.5px;top:793px" width="9" height="11" viewBox="0 0 9 11"><path d="M8.2 5.5 L0.8 0.8 V10.2 Z" fill="#737373" stroke="#737373" stroke-width="1.2" stroke-linejoin="round"/></svg>
<div class="a" style="left:1008px;top:274px;width:21px;height:508px;background:#f8f8f8;border-radius:10px"></div>
<svg style="left:1012.5px;top:280px" width="12" height="9" viewBox="0 0 12 9"><path d="M6 1 L10.8 7.8 H1.2 Z" fill="#737373" stroke="#737373" stroke-width="1.2" stroke-linejoin="round"/></svg>
<div class="a" style="left:1013px;top:295px;width:11px;height:464px;background:#737373;border-radius:5.5px"></div>
<svg style="left:1012.5px;top:767px" width="12" height="9" viewBox="0 0 12 9"><path d="M6 8 L10.8 1.2 H1.2 Z" fill="#737373" stroke="#737373" stroke-width="1.2" stroke-linejoin="round"/></svg>
<!-- STATUS BAR -->
<div class="a" style="left:2px;top:819px;width:1028px;height:1px;background:#f9f9f9"></div>
<div class="a" style="left:2px;top:820px;width:1028px;height:25px;background:#f5f5f5"></div>
<div class="t" style="left:15px;top:823px;font-size:14.5px;line-height:20px;color:#333">就绪</div>
<svg style="left:69.5px;top:824px" width="20" height="18" viewBox="0 0 20 18">
<circle cx="8.3" cy="2.7" r="1.9" fill="none" stroke="#333" stroke-width="1.2"/>
<path d="M1 4.3 C2.2 6 4.2 5.6 5.2 6.8 C5.6 9.4 5 12 4.6 14.4 C4.3 16.4 4.7 17.3 6.2 17" fill="none" stroke="#333" stroke-width="1.2" stroke-linecap="round"/>
<path d="M14.9 4.1 C13.6 5.7 11.7 6 11.4 7.6 V9.8" fill="none" stroke="#333" stroke-width="1.2" stroke-linecap="round"/>
<path d="M9.1 13.5 L12.6 17 L18.8 10.4" fill="none" stroke="#333" stroke-width="1.3"/>
</svg>
<div class="t" style="left:92px;top:823px;font-size:14.5px;line-height:20px;color:#333;letter-spacing:0.4px">辅助功能: 一切就绪</div>
<div class="a" style="left:637px;top:820px;width:50px;height:25px;background:#e0e0e0"></div>
<svg style="left:653px;top:824px" width="17" height="17" viewBox="0 0 17 17"><rect x="1" y="1" width="15" height="15" fill="#f4f4f4" stroke="#333" stroke-width="1.9"/><path d="M6 1 V16 M11 1 V16 M1 6 H16 M1 11 H16" stroke="#333" stroke-width="1.8"/></svg>
<svg style="left:703px;top:824px" width="18" height="17" viewBox="0 0 18 17"><rect x="0.8" y="0.8" width="16.4" height="15.4" fill="none" stroke="#333" stroke-width="1.5"/><rect x="4.2" y="3.8" width="9.6" height="9.6" fill="none" stroke="#333" stroke-width="1.2"/><path d="M6.4 6.6 H11.6 M6.4 8.6 H11.6 M6.4 10.6 H11.6" stroke="#333" stroke-width="1"/></svg>
<svg style="left:753px;top:824px" width="18" height="17" viewBox="0 0 18 17"><rect x="0.8" y="0.8" width="16.4" height="15.4" fill="none" stroke="#333" stroke-width="1.5"/><path d="M6 0.8 V8.6 M11.4 0.8 V8.6 H0.8" fill="none" stroke="#333" stroke-width="1.4"/></svg>
<div class="a" style="left:794px;top:831.8px;width:10px;height:1.3px;background:#333"></div>
<div class="a" style="left:810px;top:832.3px;width:128px;height:1px;background:#666"></div>
<div class="a" style="left:870px;top:826px;width:6.4px;height:14px;background:#666"></div>
<svg style="left:941.5px;top:828.5px" width="9" height="9" viewBox="0 0 9 9"><path d="M4.5 0 V9 M0 4.5 H9" stroke="#333" stroke-width="1.3"/></svg>
<div class="t" style="left:968.5px;top:823.5px;font-size:14.5px;line-height:20px;color:#333;letter-spacing:0.3px">100%</div>
<!-- WATERMARK -->
<div class="t" style="left:377px;top:202px;font-family:'Noto Sans CJK SC','Liberation Sans',sans-serif;font-weight:900;font-size:22px;line-height:30px;letter-spacing:14px;color:#e81a24">我爱分享网</div>
<div class="t" style="left:377.5px;top:238.5px;font-family:'Liberation Serif',serif;font-weight:bold;font-size:18px;line-height:22px;letter-spacing:0.09px;color:#e81a24">www.zhanshaoyi.com</div>
<div class="t" style="left:913.5px;top:820px;font-family:'Liberation Serif',serif;font-size:14px;line-height:20px;letter-spacing:0.6px;color:#e8282e">zhanshaoyi.com</div>
</body>
</html>
